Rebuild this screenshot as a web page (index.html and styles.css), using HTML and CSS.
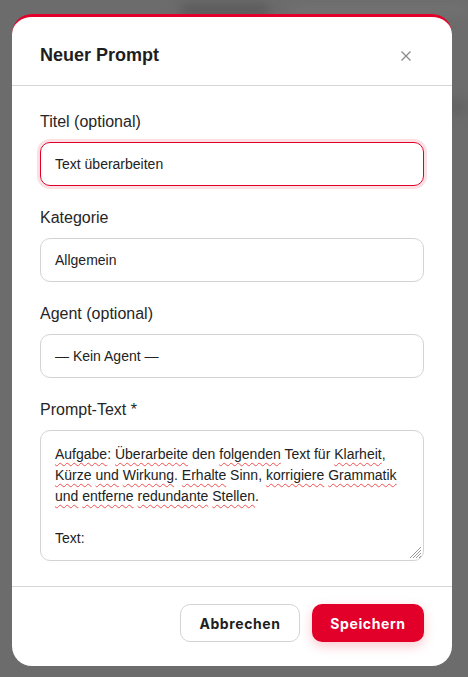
FILE: index.html
```html
<!DOCTYPE html>
<html lang="de">
<head>
<meta charset="utf-8">
<title>Neuer Prompt</title>
<link rel="stylesheet" href="styles.css">
</head>
<body>
<div class="backdrop">
  <div class="ghost ghost-a"></div>
  <div class="ghost ghost-b"></div>
  <div class="ghost ghost-c"></div>
</div>
<div class="overlay">
  <div class="modal">
    <div class="modal-header">
      <h2 class="modal-title">Neuer Prompt</h2>
      <button class="close-btn" aria-label="Schließen">
        <svg width="12" height="12" viewBox="0 0 12 12"><path d="M1.5 1.5 L10.5 10.5 M10.5 1.5 L1.5 10.5" stroke="#8a8a8a" stroke-width="1.3" fill="none"/></svg>
      </button>
    </div>
    <div class="modal-body">
      <div class="field">
        <label class="label">Titel (optional)</label>
        <div class="input focused">Text überarbeiten</div>
      </div>
      <div class="field">
        <label class="label">Kategorie</label>
        <div class="input">Allgemein</div>
      </div>
      <div class="field">
        <label class="label">Agent (optional)</label>
        <div class="input">— Kein Agent —</div>
      </div>
      <div class="field">
        <label class="label">Prompt-Text *</label>
        <div class="textarea">
          <p class="ta-line"><span class="sp">Aufgabe</span>: <span class="sp">Überarbeite</span> den <span class="sp">folgenden</span> Text für <span class="sp">Klarheit</span>,</p>
          <p class="ta-line"><span class="sp">Kürze</span> <span class="sp">und</span> <span class="sp">Wirkung</span>. <span class="sp">Erhalte</span> Sinn, <span class="sp">korrigiere</span> <span class="sp">Grammatik</span></p>
          <p class="ta-line"><span class="sp">und</span> <span class="sp">entferne</span> <span class="sp">redundante</span> <span class="sp">Stellen</span>.</p>
          <p class="ta-line">&nbsp;</p>
          <p class="ta-line">Text:</p>
          <svg class="grip" width="14" height="14" viewBox="0 0 14 14"><path d="M13 2 L2 13 M13 5 L5 13 M13 8 L8 13 M13 11 L11 13" stroke="#999" stroke-width="1" fill="none"/></svg>
        </div>
      </div>
    </div>
    <div class="modal-footer">
      <button class="btn btn-secondary">Abbrechen</button>
      <button class="btn btn-primary">Speichern</button>
    </div>
  </div>
</div>
</body>
</html>
```
FILE: styles.css
```css
* { box-sizing: border-box; }
html, body { margin: 0; padding: 0; height: 100%; }
body {
  background: #6b6b6b;
  font-family: "Liberation Sans", Arial, sans-serif;
  color: #222;
  overflow: hidden;
  position: relative;
}
.backdrop {
  position: absolute;
  inset: 0;
  background: #6c6c6c;
}
.ghost {
  position: absolute;
  background: #555;
  filter: blur(6px);
  border-radius: 6px;
}
.ghost-a { left: 180px; top: 4px; width: 90px; height: 14px; background: #5a5a5a; }
.ghost-b { left: 290px; top: 6px; width: 178px; height: 8px; background: #747474; }
.ghost-c { left: 400px; top: 100px; width: 68px; height: 14px; background: #626262; }

.overlay {
  position: relative;
  padding: 14px 16px 0 12px;
}
.modal {
  width: 440px;
  background: #fff;
  border-top: 3px solid #e2002a;
  border-radius: 20px;
  overflow: hidden;
}
.modal-header {
  display: flex;
  align-items: center;
  justify-content: space-between;
  padding: 27px 40px 18px 28px;
  border-bottom: 1px solid #d6d6d6;
}
.modal-title {
  margin: 0;
  font-size: 18px;
  line-height: 23px;
  font-weight: 700;
  color: #1e1e1e;
}
.close-btn {
  border: 0;
  background: none;
  padding: 0;
  width: 12px;
  height: 12px;
  display: flex;
  cursor: pointer;
}
.modal-body {
  padding: 26px 28px 25px 28px;
  display: flex;
  flex-direction: column;
  gap: 22px;
}
.field {
  display: flex;
  flex-direction: column;
  gap: 10px;
}
.label {
  font-size: 16px;
  line-height: 20px;
  color: #262626;
}
.input {
  height: 44px;
  border: 1px solid #d3d3d3;
  border-radius: 10px;
  padding: 0 14px;
  display: flex;
  align-items: center;
  font-size: 14px;
  color: #222;
}
.input.focused {
  border-color: #e2002a;
  box-shadow: 0 0 0 3px #fbe1e5;
}
.textarea {
  position: relative;
  height: 131px;
  border: 1px solid #d3d3d3;
  border-radius: 10px;
  padding: 13px 14px;
  font-size: 14px;
  line-height: 21px;
  color: #222;
}
.ta-line { margin: 0; white-space: nowrap; }
.sp {
  text-decoration: underline wavy #f05050;
  text-decoration-thickness: 1px;
  text-underline-offset: 3px;
}
.grip {
  position: absolute;
  right: 1px;
  bottom: 1px;
}
.modal-footer {
  display: flex;
  justify-content: flex-end;
  gap: 12px;
  padding: 17px 28px 24px;
  border-top: 1px solid #d6d6d6;
}
.btn {
  height: 38px;
  border-radius: 10px;
  font-family: Inter, "Liberation Sans", sans-serif;
  font-weight: 700;
  font-size: 14px;
  letter-spacing: 0.6px;
  cursor: pointer;
}
.btn-secondary {
  width: 120px;
  background: #fff;
  border: 1px solid #d3d3d3;
  color: #1e1e1e;
}
.btn-primary {
  width: 112px;
  background: #e2002a;
  border: 0;
  color: #fff;
  box-shadow: 0 4px 12px rgba(226, 0, 42, 0.22);
}
```
